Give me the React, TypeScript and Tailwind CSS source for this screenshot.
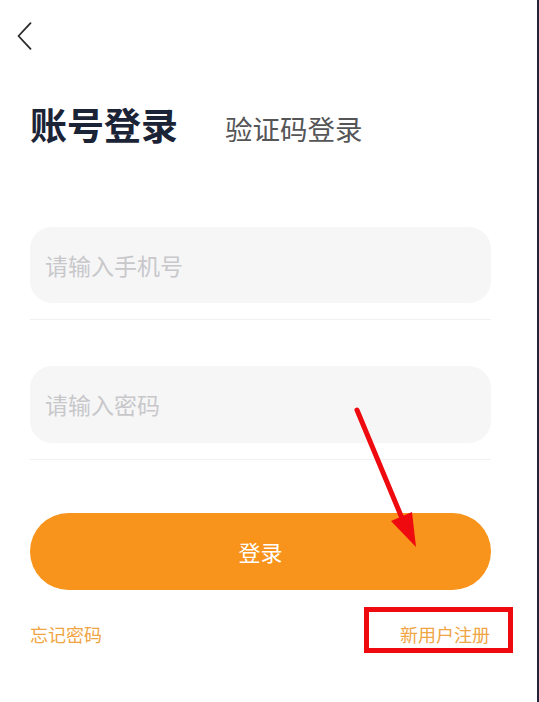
import React from "react";

const font = { fontFamily: '"Noto Sans CJK SC", "Noto Sans", sans-serif' };

export default function App() {
  return (
    <div className="relative w-[539px] h-[702px] bg-white overflow-hidden flex" style={font}>
      <div className="flex-1 flex flex-col border-r-[2px] border-[#23233a]">
        <div className="pl-[17px] pt-[22px]">
          <svg width="15" height="28" viewBox="0 0 15 28" fill="none">
            <path d="M13.5 1.2 L1.5 14 L13.5 26.8" stroke="#2a2a2a" strokeWidth="1.8" strokeLinecap="round" strokeLinejoin="round" />
          </svg>
        </div>

        <div className="flex items-end pl-[30px] mt-[52px]">
          <span className="text-[37px] leading-[44px] font-bold text-[#1b2336]">账号登录</span>
          <span className="ml-[47px] text-[27.5px] leading-[36px] text-[#555557]">验证码登录</span>
        </div>

        <div className="flex flex-col pl-[30px] pr-[46px] mt-[81px]">
          <div className="h-[76px] rounded-[22px] bg-[#f6f6f7] flex items-center pl-[15px]">
            <span className="text-[23px] text-[#c8c8cb]">请输入手机号</span>
          </div>
          <div className="mt-[16px] h-px bg-[#f1f1f3]" />

          <div className="mt-[46px] h-[77px] rounded-[22px] bg-[#f6f6f7] flex items-center pl-[15px]">
            <span className="text-[23px] text-[#c8c8cb]">请输入密码</span>
          </div>
          <div className="mt-[16px] h-px bg-[#f1f1f3]" />

          <div className="mt-[53px] h-[77px] rounded-full bg-[#f8931c] flex items-center justify-center">
            <span className="text-[22px] text-white">登录</span>
          </div>

          <div className="mt-[32px] flex justify-between items-center pr-[1px]">
            <span className="text-[18px] leading-[24px] text-[#f0a544]">忘记密码</span>
            <span className="text-[18px] leading-[24px] text-[#f0a544]">新用户注册</span>
          </div>
        </div>
      </div>

      {/* annotation: red box */}
      <div className="absolute left-[364px] top-[607px] w-[149px] h-[46px] border-[5px] border-[#ee0a0e]" />

      {/* annotation: red arrow */}
      <svg className="absolute left-0 top-0" width="539" height="702" viewBox="0 0 539 702">
        <line x1="357" y1="410" x2="404" y2="523" stroke="#ee0a0e" strokeWidth="5" strokeLinecap="round" />
        <polygon points="391,521 412,512 416,547" fill="#ee0a0e" />
      </svg>
    </div>
  );
}
